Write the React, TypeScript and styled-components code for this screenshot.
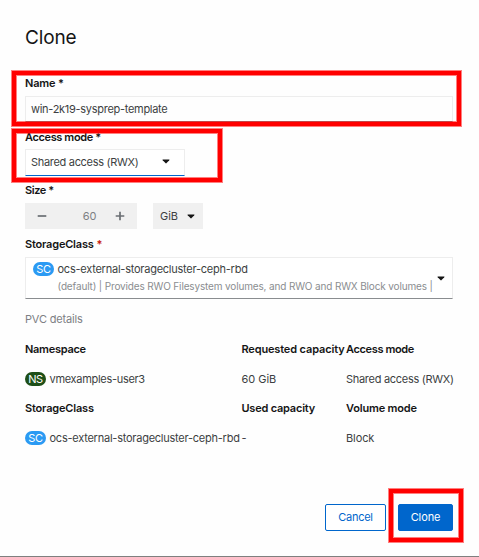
import React from "react";
import styled, { createGlobalStyle } from "styled-components";

const Global = createGlobalStyle`
  * { box-sizing: border-box; }
  body { margin: 0; background: #fff; }
`;

const Dialog = styled.main`
  position: relative;
  width: 479px;
  height: 557px;
  padding: 25px 25px 0;
  overflow: hidden;
  background: #fefefe;
  border-bottom: 1px solid #7f7f7f;
  color: #151515;
  font-family: Inter, "Noto Sans", sans-serif;
  font-size: 11px;
  white-space: nowrap;
`;

const Text = styled.span<{ $ls?: number }>`
  letter-spacing: ${(p) => p.$ls ?? 0}px;
`;

const Title = styled.h1`
  margin: 0 0 25px;
  height: 24px;
  font-size: 19px;
  line-height: 26px;
  font-weight: 400;
  letter-spacing: -0.15px;
`;

const Field = styled.section<{ $height: number }>`
  height: ${(p) => p.$height}px;
`;

const Label = styled.label<{ $height?: number }>`
  display: block;
  height: ${(p) => p.$height ?? 22}px;
  line-height: 18px;
  font-weight: 600;
`;

const Required = styled.span`
  color: #c9190b;
`;

const Input = styled.div`
  display: flex;
  align-items: center;
  width: 428px;
  height: 26px;
  padding-left: 5px;
  border: 1px solid #ededed;
  border-bottom-color: #8a8d90;
  color: #3c3f42;
`;

const Select = styled.button<{ $width: number; $height: number; $active?: boolean }>`
  display: flex;
  align-items: center;
  justify-content: space-between;
  width: ${(p) => p.$width}px;
  height: ${(p) => p.$height}px;
  padding: 0 ${(p) => (p.$active ? 14 : 7)}px ${(p) => (p.$active ? 2 : 0)}px 5px;
  border: 1px solid #ededed;
  border-bottom-color: ${(p) => (p.$active ? "#06c" : "#8a8d90")};
  background: #fff;
  color: #3c3f42;
  font: inherit;
  text-align: left;
`;

const SizeRow = styled.div`
  display: flex;
  gap: 16px;
`;

const Stepper = styled.div`
  display: grid;
  grid-template-columns: 34px 43px 35px;
  align-items: center;
  justify-items: center;
  width: 112px;
  height: 26px;
  background: #f0f0f0;
  color: #7d8084;
`;

const Amount = styled.span`
  justify-self: end;
  padding-right: 5.5px;
`;

const Unit = styled.button`
  display: flex;
  align-items: center;
  justify-content: space-between;
  width: 50px;
  height: 26px;
  padding: 0 8px 0 7px;
  border: 0;
  background: #f0f0f0;
  color: #3c3f42;
  font: inherit;
`;

const Resource = styled.span`
  display: flex;
  align-items: center;
  gap: 3.5px;
`;

const Badge = styled.span<{ $color: string }>`
  flex: none;
  width: 21px;
  height: 14px;
  border-radius: 7px;
  background: ${(p) => p.$color};
  color: #fff;
  font-size: 11px;
  line-height: 14px;
  text-align: center;
  letter-spacing: -0.3px;
`;

const ClassOption = styled.span`
  display: grid;
  flex: none;
  width: 404px;
  grid-template-rows: 17px 16px;
  padding: 0 0 2px 2px;
  align-items: center;
`;

const Description = styled.span`
  padding-left: 24.5px;
  color: #8a8d90;
  font-size: 10px;
`;

const SectionTitle = styled.h2`
  margin: 0;
  height: 30px;
  color: #7d8084;
  font-size: 11px;
  line-height: 18px;
  font-weight: 400;
`;

const Details = styled.div`
  display: grid;
  grid-template-columns: 216.4px 104.6px 108px;
  grid-template-rows: 30px 29px 30px 18px;
  line-height: 18px;
`;

const Head = styled.strong`
  font-weight: 600;
`;

const Cell = styled.div`
  color: #3c3f42;
`;

const Footer = styled.footer`
  display: flex;
  justify-content: flex-end;
  gap: 12px;
  width: 428px;
  margin-top: 57px;
`;

const Button = styled.button<{ $primary?: boolean }>`
  width: ${(p) => (p.$primary ? 55 : 61)}px;
  height: 27px;
  padding: 0 0 1px;
  border: 1px solid #06c;
  border-radius: 2px;
  background: ${(p) => (p.$primary ? "#06c" : "#fff")};
  color: ${(p) => (p.$primary ? "#fff" : "#06c")};
  font: inherit;
`;

const Highlight = styled.div<{ $x: number; $y: number; $w: number; $h: number }>`
  position: absolute;
  left: ${(p) => p.$x}px;
  top: ${(p) => p.$y}px;
  width: ${(p) => p.$w}px;
  height: ${(p) => p.$h}px;
  border: 1px solid #ff000080;
  pointer-events: none;
  &::before {
    content: "";
    position: absolute;
    inset: 0;
    border: 4px solid #f00;
  }
  &::after {
    content: "";
    position: absolute;
    inset: 4px;
    border: 1px solid #ff000080;
  }
`;

const CaretIcon = styled.svg`
  flex: none;
  width: 8px;
  height: 5px;
`;

const Caret = () => (
  <CaretIcon viewBox="0 0 8 5">
    <path d="M.8 0.5h6.4q.6.2.1.8L4.6 4.1q-.6.6-1.2 0L.7 1.3Q.2.7.8.5Z" fill="#151515" />
  </CaretIcon>
);

const StepIcon = ({ plus }: { plus?: boolean }) => (
  <svg width="10" height="10" viewBox="0 0 10 10" stroke="#6a6e73" strokeWidth="1.7">
    <path d={plus ? "M.7 5h8.6M5 .7v8.6" : "M.7 5h8.6"} />
  </svg>
);

export default function App() {
  return (
    <>
      <Global />
      <Dialog>
        <Title>Clone</Title>
        <Field $height={54}>
          <Label><Text $ls={-0.18}>Name *</Text></Label>
          <Input><Text $ls={-0.29}>win-2k19-sysprep-template</Text></Input>
        </Field>
        <Field $height={53}>
          <Label $height={21}><Text $ls={-0.38}>Access mode *</Text></Label>
          <Select $width={160} $height={27} $active>
            <Text $ls={-0.31}>Shared access (RWX)</Text>
            <Caret />
          </Select>
        </Field>
        <Field $height={54}>
          <Label><Text $ls={-0.4}>Size *</Text></Label>
          <SizeRow>
            <Stepper>
              <StepIcon />
              <Amount>60</Amount>
              <StepIcon plus />
            </Stepper>
            <Unit><Text>GiB</Text><Caret /></Unit>
          </SizeRow>
        </Field>
        <Field $height={75}>
          <Label><Text $ls={-0.2}>StorageClass</Text> <Required>*</Required></Label>
          <Select $width={428} $height={42}>
            <ClassOption>
              <Resource>
                <Badge $color="#2b9af3">SC</Badge>
                <Text $ls={-0.24}>ocs-external-storagecluster-ceph-rbd</Text>
              </Resource>
              <Description>
                <Text $ls={-0.15}>(default) | Provides RWO Filesystem volumes, and RWO and RWX Block volumes |</Text>
              </Description>
            </ClassOption>
            <Caret />
          </Select>
        </Field>
        <SectionTitle><Text $ls={-0.18}>PVC details</Text></SectionTitle>
        <Details>
          <Head><Text $ls={-0.28}>Namespace</Text></Head>
          <Head><Text $ls={-0.14}>Requested capacity</Text></Head>
          <Head><Text $ls={-0.36}>Access mode</Text></Head>
          <Cell>
            <Resource><Badge $color="#1e4f18">NS</Badge><Text $ls={-0.3}>vmexamples-user3</Text></Resource>
          </Cell>
          <Cell><Text>60 GiB</Text></Cell>
          <Cell><Text $ls={-0.29}>Shared access (RWX)</Text></Cell>
          <Head><Text $ls={-0.18}>StorageClass</Text></Head>
          <Head><Text $ls={-0.2}>Used capacity</Text></Head>
          <Head><Text $ls={-0.18}>Volume mode</Text></Head>
          <Cell>
            <Resource><Badge $color="#2b9af3">SC</Badge><Text $ls={-0.24}>ocs-external-storagecluster-ceph-rbd</Text></Resource>
          </Cell>
          <Cell>-</Cell>
          <Cell><Text $ls={-0.1}>Block</Text></Cell>
        </Details>
        <Footer>
          <Button><Text $ls={-0.3}>Cancel</Text></Button>
          <Button $primary><Text $ls={-0.1}>Clone</Text></Button>
        </Footer>
        <Highlight $x={11} $y={70} $w={451} $h={57} />
        <Highlight $x={11} $y={128} $w={212} $h={55} />
        <Highlight $x={388} $y={488} $w={76} $h={55} />
      </Dialog>
    </>
  );
}
